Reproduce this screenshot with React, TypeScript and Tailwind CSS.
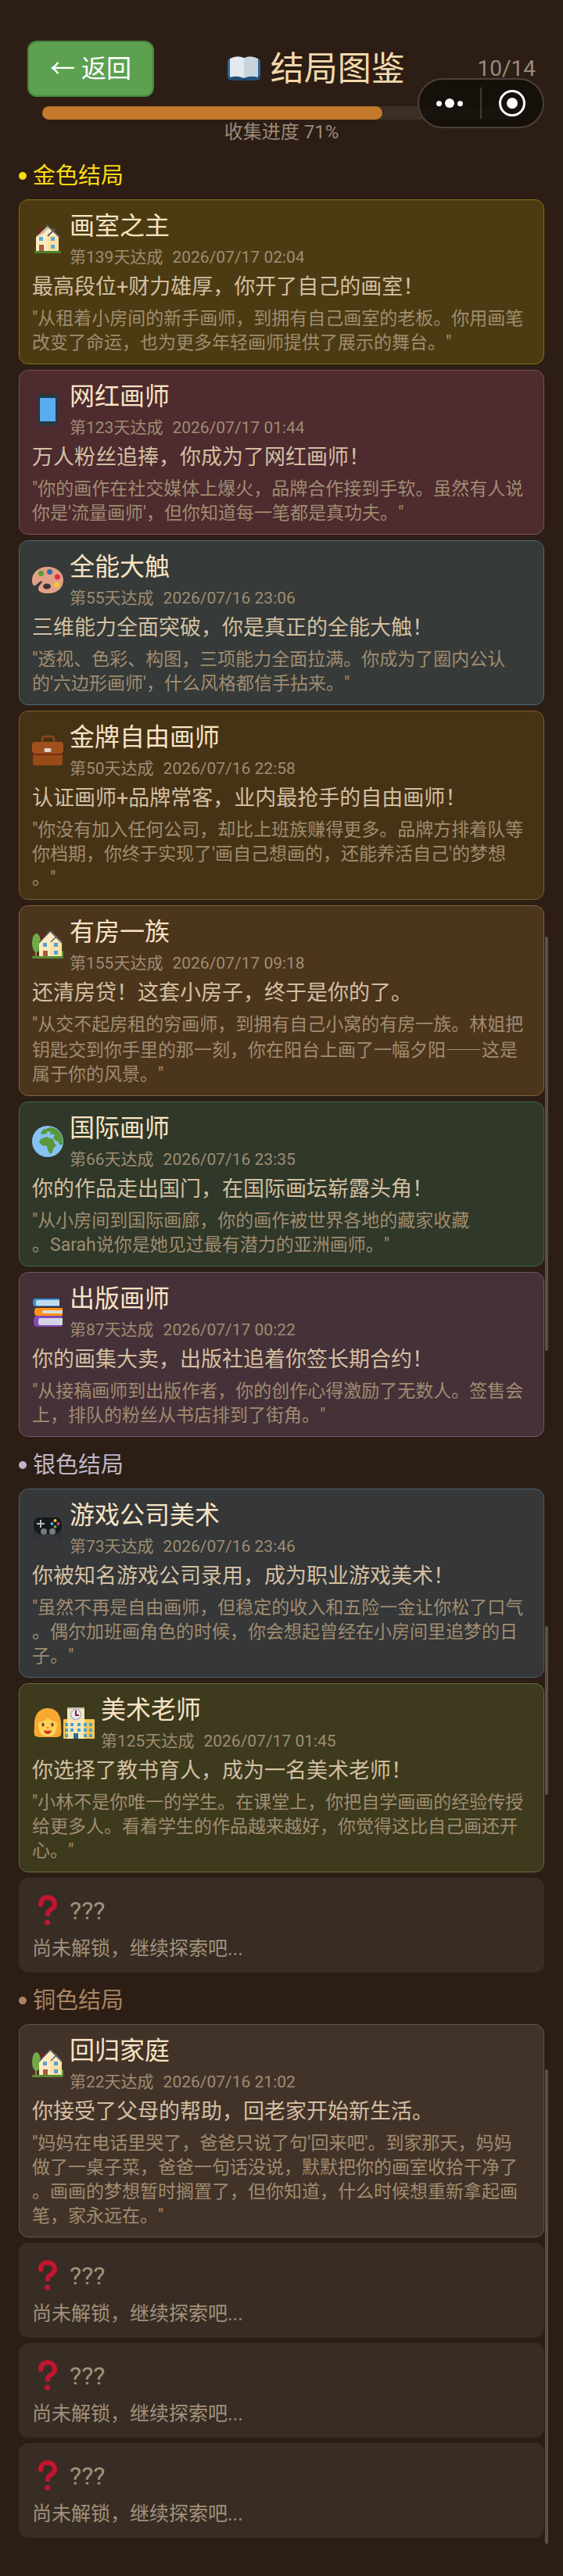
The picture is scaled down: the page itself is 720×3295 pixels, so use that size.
import { Fragment, type ReactNode } from 'react';

function BookIcon() {
  return (
    <svg viewBox="0 0 44 34" className="h-[34px] w-11 shrink-0" aria-hidden="true">
      <rect x="1" y="4" width="42" height="27" rx="4" fill="#2f6593" />
      <path d="M1 26h42v1a5 5 0 0 1-5 5H6a5 5 0 0 1-5-5z" fill="#1f4e78" />
      <path d="M4 4Q13-1 22 3v26Q13 25 4 28z" fill="#e3e9ef" />
      <path d="M40 4Q31-1 22 3v26q9-4 18-1z" fill="#c9d3dc" />
      <circle cx="22" cy="31" r="2" fill="#173a5c" />
    </svg>
  );
}

function Frame({ children }: { children: ReactNode }) {
  return (
    <svg viewBox="0 0 40 40" className="size-10 shrink-0" aria-hidden="true">
      {children}
    </svg>
  );
}

function HouseIcon() {
  return (
    <Frame>
      <path d="M8 6h4v10H8z" fill="#7d1a22" />
      <path d="M5 17 20 3l14 13v20H5z" fill="#fdeabf" />
      <path d="M20 16h14v20H20z" fill="#fbe0a0" />
      <path d="M4 18 19 3l3 2-8 8z" fill="#5d6470" opacity=".35" />
      <path d="M19 2 35 17M20 16 29 7" stroke="#5d6069" strokeWidth="2" fill="none" />
      <path d="M9 17h5v5H9zM24 17h5v5h-5zM24 27h5v5h-5z" fill="#58a9dc" />
      <path d="M9 27h6v9H9z" fill="#a95c3c" />
      <rect x="3" y="35" width="34" height="3" rx="1" fill="#4d8230" />
    </Frame>
  );
}

function PhoneIcon() {
  return (
    <Frame>
      <rect x="8" y="0" width="24" height="40" rx="3" fill="#273740" />
      <rect x="10" y="5" width="20" height="30" fill="#58adf1" />
    </Frame>
  );
}

function PaletteIcon() {
  return (
    <Frame>
      <path
        d="M20 3c11 0 20 7 20 17 0 11-9 17-19 17-8 0-13-2-13-6 0-4 5-7 5-10-5 1-7 6-10 6-2 0-3-3-3-7C0 10 9 3 20 3z"
        fill="#e2a187"
      />
      <ellipse cx="19" cy="28" rx="5" ry="3.500" fill="#3a3233" />
      <circle cx="11.500" cy="11.500" r="3.500" fill="#5b9a34" />
      <circle cx="22.500" cy="9.500" r="3.500" fill="#2f6ca6" />
      <circle cx="32.500" cy="16" r="3.500" fill="#e22f3e" />
      <circle cx="31.500" cy="26" r="3.500" fill="#fcc33c" />
    </Frame>
  );
}

function BriefcaseIcon() {
  return (
    <Frame>
      <path d="M13 11V5q0-3 3-3h9q3 0 3 3v6" stroke="#8c431c" strokeWidth="2.500" fill="none" />
      <rect x="1" y="22" width="38" height="17" rx="3" fill="#974917" />
      <path d="M4 9h32q4 0 4 4v8q0 4-4 4H4q-4 0-4-4v-8q0-4 4-4z" fill="#a2511d" />
      <path d="M0 22q1 3 4 3h32q3 0 4-3" stroke="#6b220e" strokeWidth="1.500" fill="none" />
      <rect x="15.500" y="17" width="9" height="5" rx="2" fill="#dedad3" />
    </Frame>
  );
}

function GardenHouseIcon() {
  return (
    <Frame>
      <path d="M11 6h4v9h-4z" fill="#7d1a22" />
      <path d="M4 22h2v14H4z" fill="#b67a35" />
      <ellipse cx="5.500" cy="17" rx="5.500" ry="12" fill="#70ac46" />
      <circle cx="37" cy="31" r="4" fill="#5f9d37" />
      <path d="M9 17 24 2l14 14v20H9z" fill="#fdeabf" />
      <path d="M23 16h15v20H23z" fill="#fbe3aa" />
      <path d="M9 17 23 2l15 15M24 16l8-8" stroke="#5d6069" strokeWidth="1.500" fill="none" />
      <path d="M14 17h5v5h-5zM28 17h5v5h-5zM28 27h5v5h-5z" fill="#589fd8" />
      <path d="M14 27h6v9h-6z" fill="#a95c3c" />
      <rect x="0" y="34" width="40" height="3" rx="1" fill="#5b8b33" />
    </Frame>
  );
}

function GlobeIcon() {
  return (
    <Frame>
      <circle cx="20" cy="20" r="20" fill="#86c3f2" />
      <path
        d="M12 8q2-4 6-4l5-2q9 1 13 7 4 6 3 14l-3 2-3-5-3-1-3-4 2-3-3-2-2 2-2-4-4 2-4 1-3-1zM11 17l8-3 4 2 4 1 2 6 2 2-4 4-1 5-3 2-3-5-1-5-6-1-4-4z"
        fill="#59983b"
      />
      <path d="m19 8 5-1-1 3-4 1z" fill="#86c3f2" />
    </Frame>
  );
}

function BooksIcon() {
  return (
    <Frame>
      <path d="M4 3h31v10H4q-3 0-3-5t3-5z" fill="#3b91d8" />
      <path d="M7 5h28v7H7q-2 0-2-3.500T7 5z" fill="#c4dcea" />
      <path d="M6 15h33v10H6q-3 0-3-5t3-5z" fill="#fb9217" />
      <path d="M15 18h24v4H15q-2 0-2-2t2-2z" fill="#dbdcd7" />
      <path d="M6 25h32v14H6q-4 0-4-7t4-7z" fill="#8449ba" />
      <path d="M10 28h29v9H10q-2 0-2-4.500t2-4.500z" fill="#d2d6e4" />
    </Frame>
  );
}

function GamepadIcon() {
  return (
    <Frame>
      <path d="M3 20h34q3 6 2 13-3 3-6-1l-6-5H13l-6 5q-3 4-6 1-1-7 2-13z" fill="#2f3238" />
      <path d="M8 6h24q6 1 6 11 0 8-6 9-5 4-9 1h-6q-4 3-9-1-6-1-6-9Q2 7 8 6z" fill="#16191d" />
      <path d="M11 9v10M6 14h10" stroke="#b6bcc4" strokeWidth="2" />
      <circle cx="15" cy="24" r="4" fill="#727a83" />
      <circle cx="26" cy="24" r="4" fill="#727a83" />
      <circle cx="29.500" cy="10" r="2" fill="#f3c93b" />
      <circle cx="25.500" cy="14" r="2" fill="#49a5e3" />
      <circle cx="33.500" cy="14" r="2" fill="#e3423d" />
      <circle cx="29.500" cy="18" r="2" fill="#5ba83d" />
    </Frame>
  );
}

function WomanIcon() {
  return (
    <Frame>
      <path d="M20 1c11 0 17 8 17 20 0 6 1 10 0 14-1 3-5 3-9 3H12c-4 0-8 0-9-3-1-4 0-8 0-14C3 9 9 1 20 1z" fill="#f9a932" />
      <path d="M8 19q8-1 12-6 5 5 12 6 1 18-12 18T8 19z" fill="#fdd056" />
      <ellipse cx="14" cy="22" rx="1.500" ry="2.500" fill="#623f1c" />
      <ellipse cx="26" cy="22" rx="1.500" ry="2.500" fill="#623f1c" />
      <ellipse cx="20" cy="26" rx="2" ry="1" fill="#e79027" />
      <path d="M15 29q5 2 10 0-1 5-5 5t-5-5z" fill="#c8322d" />
    </Frame>
  );
}

function SchoolIcon() {
  return (
    <Frame>
      <rect x="0" y="15" width="40" height="25" rx="1" fill="#f4c653" />
      <path d="M5 2q0-2 2-2h18q2 0 2 2v38H5z" fill="#f9e6b8" />
      <path d="M5 0h22v2H5z" fill="#c2bcb0" />
      <circle cx="16" cy="9" r="6.500" fill="#e8e9f0" stroke="#b7b4c3" strokeWidth="1.500" />
      <path d="M16 4v6h4" stroke="#8c1c35" strokeWidth="2" fill="none" />
      <path
        d="M2 20h4v4H2zM9 20h4v4H9zM18 20h4v4h-4zM26 20h4v4h-4zM33 20h4v4h-4zM2 27h4v4H2zM9 27h4v4H9zM18 27h4v4h-4zM26 27h4v4h-4zM33 27h4v4h-4zM2 34h4v4H2zM26 34h4v4h-4zM33 34h4v4h-4z"
        fill="#4aa0cb"
      />
      <path d="M13 33h6v7h-6z" fill="#2f6995" />
    </Frame>
  );
}

function QuestionIcon() {
  return (
    <Frame>
      <path d="M11 12c0-6 4-9 9-9 5 0 9 3 9 9 0 6-9 7-9 11v4" stroke="#c3152f" strokeWidth="6" fill="none" />
      <circle cx="11" cy="12" r="3" fill="#c3152f" />
      <circle cx="19.500" cy="35" r="3.500" fill="#c3152f" />
    </Frame>
  );
}

type Ending = {
  name: string;
  day: string;
  time: string;
  desc: string;
  quote: string[];
  tone: string;
  icon: ReactNode;
};

const gold: Ending[] = [
  {
    name: '画室之主',
    day: '第139天达成',
    time: '2026/07/17 02:04',
    desc: '最高段位+财力雄厚，你开了自己的画室！',
    quote: ['"从租着小房间的新手画师，到拥有自己画室的老板。你用画笔', '改变了命运，也为更多年轻画师提供了展示的舞台。"'],
    tone: 'border-[#86700f] bg-[#4c3b12]',
    icon: <HouseIcon />,
  },
  {
    name: '网红画师',
    day: '第123天达成',
    time: '2026/07/17 01:44',
    desc: '万人粉丝追捧，你成为了网红画师！',
    quote: ['"你的画作在社交媒体上爆火，品牌合作接到手软。虽然有人说', "你是'流量画师'，但你知道每一笔都是真功夫。\""],
    tone: 'border-[#804a5c] bg-[#4d2b2f]',
    icon: <PhoneIcon />,
  },
  {
    name: '全能大触',
    day: '第55天达成',
    time: '2026/07/16 23:06',
    desc: '三维能力全面突破，你是真正的全能大触！',
    quote: ['"透视、色彩、构图，三项能力全面拉满。你成为了圈内公认', "的'六边形画师'，什么风格都信手拈来。\""],
    tone: 'border-[#486a74] bg-[#363a38]',
    icon: <PaletteIcon />,
  },
  {
    name: '金牌自由画师',
    day: '第50天达成',
    time: '2026/07/16 22:58',
    desc: '认证画师+品牌常客，业内最抢手的自由画师！',
    quote: ['"你没有加入任何公司，却比上班族赚得更多。品牌方排着队等', "你档期，你终于实现了'画自己想画的，还能养活自己'的梦想", '。"'],
    tone: 'border-[#7c5f24] bg-[#463316]',
    icon: <BriefcaseIcon />,
  },
  {
    name: '有房一族',
    day: '第155天达成',
    time: '2026/07/17 09:18',
    desc: '还清房贷！这套小房子，终于是你的了。',
    quote: ['"从交不起房租的穷画师，到拥有自己小窝的有房一族。林姐把', '钥匙交到你手里的那一刻，你在阳台上画了一幅夕阳——这是', '属于你的风景。"'],
    tone: 'border-[#846238] bg-[#4c351d]',
    icon: <GardenHouseIcon />,
  },
  {
    name: '国际画师',
    day: '第66天达成',
    time: '2026/07/16 23:35',
    desc: '你的作品走出国门，在国际画坛崭露头角！',
    quote: ['"从小房间到国际画廊，你的画作被世界各地的藏家收藏', '。Sarah说你是她见过最有潜力的亚洲画师。"'],
    tone: 'border-[#40684c] bg-[#2f3829]',
    icon: <GlobeIcon />,
  },
  {
    name: '出版画师',
    day: '第87天达成',
    time: '2026/07/17 00:22',
    desc: '你的画集大卖，出版社追着你签长期合约！',
    quote: ['"从接稿画师到出版作者，你的创作心得激励了无数人。签售会', '上，排队的粉丝从书店排到了街角。"'],
    tone: 'border-[#74536c] bg-[#453138]',
    icon: <BooksIcon />,
  },
];

const silver: Ending[] = [
  {
    name: '游戏公司美术',
    day: '第73天达成',
    time: '2026/07/16 23:46',
    desc: '你被知名游戏公司录用，成为职业游戏美术！',
    quote: ['"虽然不再是自由画师，但稳定的收入和五险一金让你松了口气', '。偶尔加班画角色的时候，你会想起曾经在小房间里追梦的日', '子。"'],
    tone: 'border-[#466072] bg-[#353738]',
    icon: <GamepadIcon />,
  },
  {
    name: '美术老师',
    day: '第125天达成',
    time: '2026/07/17 01:45',
    desc: '你选择了教书育人，成为一名美术老师！',
    quote: ['"小林不是你唯一的学生。在课堂上，你把自学画画的经验传授', '给更多人。看着学生的作品越来越好，你觉得这比自己画还开', '心。"'],
    tone: 'border-[#616d36] bg-[#3d3a1e]',
    icon: (
      <>
        <WomanIcon />
        <SchoolIcon />
      </>
    ),
  },
];

const bronze: Ending[] = [
  {
    name: '回归家庭',
    day: '第22天达成',
    time: '2026/07/16 21:02',
    desc: '你接受了父母的帮助，回老家开始新生活。',
    quote: [
      "\"妈妈在电话里哭了，爸爸只说了句'回来吧'。到家那天，妈妈",
      '做了一桌子菜，爸爸一句话没说，默默把你的画室收拾干净了',
      '。画画的梦想暂时搁置了，但你知道，什么时候想重新拿起画',
      '笔，家永远在。"',
    ],
    tone: 'border-[#645445] bg-[#423329]',
    icon: <GardenHouseIcon />,
  },
];

// Full-width dashes come from the CJK face so that they join into one stroke.
function QuoteLine({ text }: { text: string }) {
  return (
    <span className="block whitespace-nowrap">
      {text.split('——').map((part, i) => (
        <Fragment key={i}>
          {i > 0 && <span className="font-['Noto_Sans_CJK_SC',sans-serif]">——</span>}
          {part}
        </Fragment>
      ))}
    </span>
  );
}

function EndingCard({ ending }: { ending: Ending }) {
  return (
    <article className={`rounded-xl border px-4 py-[11px] ${ending.tone}`}>
      <div className="flex items-center gap-2">
        <div className="flex">{ending.icon}</div>
        <div>
          <h3 className="text-[32px] leading-[44px] text-[#f8e3c5]">{ending.name}</h3>
          <p className="mt-0.5 flex gap-3 text-[21px] leading-8 text-[#9f8c72]">
            <span>{ending.day}</span>
            <span>{ending.time}</span>
          </p>
        </div>
      </div>
      <p className="mt-1 text-[27px] leading-9 text-[#d3bfa1]">{ending.desc}</p>
      <blockquote className="mt-[7px] text-[23px] leading-[31px] text-[#a08c70]">
        {ending.quote.map((line) => (
          <QuoteLine key={line} text={line} />
        ))}
      </blockquote>
    </article>
  );
}

function LockedCard() {
  return (
    <article className="rounded-xl border border-[#3a2e26] bg-[#382d25] px-4 py-[11px] text-[#a2917a]">
      <div className="flex h-[60px] items-center gap-2">
        <QuestionIcon />
        <h3 className="text-[32px] leading-[44px]">???</h3>
      </div>
      <p className="mt-px text-[25px] leading-9">尚未解锁，继续探索吧...</p>
    </article>
  );
}

function Section({ title, color, endings, locked }: { title: string; color: string; endings: Ending[]; locked: number }) {
  return (
    <section className="mt-4">
      <h2 className={`mb-2.5 flex items-center gap-2 text-[29px] leading-10 ${color}`}>
        <span className="size-2.5 rounded-full bg-current" />
        {title}
      </h2>
      <div className="flex flex-col gap-[7px]">
        {endings.map((e) => (
          <EndingCard key={e.name} ending={e} />
        ))}
        {Array.from({ length: locked }, (_, i) => (
          <LockedCard key={i} />
        ))}
      </div>
    </section>
  );
}

export default function App() {
  return (
    <main
      lang="zh-CN"
      className="relative min-h-screen bg-[#2c1e15] px-6 pt-[52px] pb-12 font-['Roboto','Noto_Sans_CJK_SC',sans-serif]"
    >
      <header className="mb-5">
        <div className="flex h-[72px] items-center justify-between px-[11px]">
          <button
            type="button"
            className="h-[72px] w-[162px] rounded-xl border-2 border-[#47853f] bg-[#5ba150] text-[32px] leading-10 text-white"
          >
            ← 返回
          </button>
          <h1 className="flex items-center gap-3 text-[43px] leading-[60px] text-[#f3d9ab]">
            <BookIcon />
            结局图鉴
          </h1>
          <span className="text-[28px] leading-10 text-[#9a8a7a]">10/14</span>
        </div>
        <div
          role="progressbar"
          aria-valuenow={71}
          aria-valuemin={0}
          aria-valuemax={100}
          aria-label="收集进度"
          className="mx-[30px] mt-3 h-[17px] rounded-full bg-[#392f22]"
        >
          <div className="h-full w-[71%] rounded-full bg-[#c37a2b]" />
        </div>
        <p className="text-center text-[24px] leading-8 text-[#9a8a7a]">收集进度 71%</p>
      </header>

      <Section title="金色结局" color="text-[#ffd90f]" endings={gold} locked={0} />
      <Section title="银色结局" color="text-[#bdb5c6]" endings={silver} locked={1} />
      <Section title="铜色结局" color="text-[#a98362]" endings={bronze} locked={3} />

      <div className="absolute top-[100px] right-6 flex h-16 w-[162px] items-center rounded-full border-2 border-[#4b403a] bg-[#120c09]/80">
        <button type="button" aria-label="更多" className="flex flex-1 items-center justify-center gap-1">
          <span className="size-[7px] rounded-full bg-white" />
          <span className="size-3 rounded-full bg-white" />
          <span className="size-[7px] rounded-full bg-white" />
        </button>
        <span className="h-10 w-0.5 bg-[#443a34]" />
        <button type="button" aria-label="关闭" className="flex flex-1 items-center justify-center">
          <span className="flex size-[34px] items-center justify-center rounded-full border-[3px] border-white">
            <span className="size-[14px] rounded-full bg-white" />
          </span>
        </button>
      </div>

      <div className="absolute top-[1198px] right-[19px] h-[530px] w-1 rounded-full bg-[#5b5049]" />
      <div className="absolute top-[2080px] right-[19px] h-[216px] w-1 rounded-full bg-[#5b5049]" />
      <div className="absolute top-[2647px] right-[19px] h-[607px] w-1 rounded-full bg-[#5b5049]" />
    </main>
  );
}
